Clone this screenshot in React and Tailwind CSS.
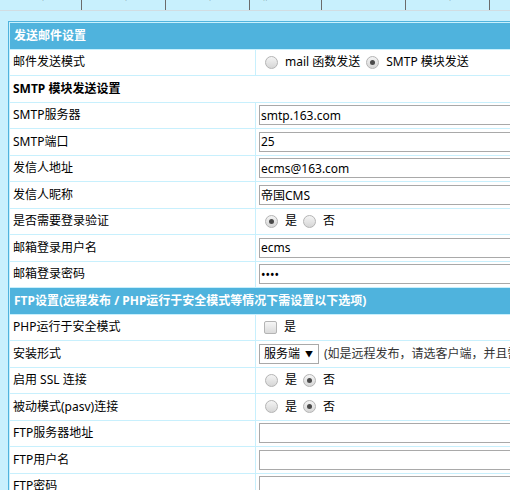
import React from "react";

const FONT = { fontFamily: '"Noto Sans", "Noto Sans CJK SC", sans-serif' };

const tabs = [
  { w: "w-[82px]", label: "基本属性设置" },
  { w: "w-[84px]", label: "用户属性设置" },
  { w: "w-[84px]", label: "附件属性设置" },
  { w: "w-[72px]", label: "信息设置" },
  { w: "w-[84px]", label: "模型设置" },
  { w: "w-[84px]", label: "其他属性设置" },
  { w: "w-[40px]", label: "" },
];

function Radio({ checked }) {
  return (
    <span className="inline-flex h-[13px] w-[13px] items-center justify-center rounded-full border border-[#b4b4b4] bg-gradient-to-b from-[#f4f4f4] to-[#d6d6d6]">
      {checked && <span className="h-[5px] w-[5px] rounded-full bg-[#4a4a4a]" />}
    </span>
  );
}

function RadioGroup({ items }) {
  return (
    <div className="flex items-center pl-[9px]">
      {items.map((it, i) => (
        <label key={i} className="mr-[6px] flex items-center">
          <Radio checked={it.checked} />
          <span className="ml-[7px]">{it.label}</span>
        </label>
      ))}
    </div>
  );
}

function TextBox({ value, type = "text" }) {
  return (
    <div className="pl-[3px]">
      <input
        type={type}
        defaultValue={value}
        readOnly
        className="h-[20px] w-[300px] border border-[#a9a9a9] bg-white px-[1px] text-[12px] text-black outline-none"
        style={FONT}
      />
    </div>
  );
}

function Header({ children }) {
  return (
    <div className="col-span-2 flex h-[25.5px] items-center bg-[#4fb3dd] pl-[4px] text-[12px] font-bold text-white">
      {children}
    </div>
  );
}

function Row({ label, children }) {
  return (
    <>
      <div className="flex h-[25.5px] items-center bg-white pl-[3px]">{label}</div>
      <div className="flex h-[25.5px] items-center bg-white">{children}</div>
    </>
  );
}

export default function App() {
  return (
    <div className="h-[490px] w-[510px] overflow-hidden bg-[#c8f0fd] text-[12px] text-black" style={FONT}>
      {/* top tab strip, mostly scrolled out of view */}
      <div className="flex h-[11px] overflow-hidden border-b border-[#d2dde2]">
        {tabs.map((t, i) => (
          <div key={i} className={`${t.w} shrink-0 overflow-hidden border-r border-[#6b6b6b] text-center`}>
            <div className="-mt-[12px] text-[12px] leading-[14px] text-black">{t.label}</div>
          </div>
        ))}
      </div>

      <div className="pl-[8px] pt-[10px]">
        <div className="w-[560px] border border-[#4fb3dd] bg-[#c8f0fd] p-px">
          <div className="grid grid-cols-[245px_1fr] gap-px">
            <Header>发送邮件设置</Header>
            <Row label="邮件发送模式">
              <RadioGroup
                items={[
                  { label: "mail 函数发送" },
                  { label: "SMTP 模块发送", checked: true },
                ]}
              />
            </Row>
            <div className="col-span-2 flex h-[25.5px] items-center bg-white pl-[3px] font-bold">
              SMTP 模块发送设置
            </div>
            <Row label="SMTP服务器">
              <TextBox value="smtp.163.com" />
            </Row>
            <Row label="SMTP端口">
              <TextBox value="25" />
            </Row>
            <Row label="发信人地址">
              <TextBox value="ecms@163.com" />
            </Row>
            <Row label="发信人昵称">
              <TextBox value="帝国CMS" />
            </Row>
            <Row label="是否需要登录验证">
              <RadioGroup items={[{ label: "是", checked: true }, { label: "否" }]} />
            </Row>
            <Row label="邮箱登录用户名">
              <TextBox value="ecms" />
            </Row>
            <Row label="邮箱登录密码">
              <TextBox value="1234" type="password" />
            </Row>

            <Header>FTP设置(远程发布 / PHP运行于安全模式等情况下需设置以下选项)</Header>
            <Row label="PHP运行于安全模式">
              <label className="flex items-center pl-[8px]">
                <span className="h-[13px] w-[13px] rounded-[2px] border border-[#b4b4b4] bg-gradient-to-b from-[#f6f6f6] to-[#dadada]" />
                <span className="ml-[7px]">是</span>
              </label>
            </Row>
            <Row label="安装形式">
              <div className="flex items-center whitespace-nowrap pl-[3px]">
                <div className="flex h-[20px] w-[60px] items-center border border-[#a9a9a9] bg-white pl-[4px]">
                  <span>服务端</span>
                  <span className="ml-[5px] text-[8px]">▼</span>
                </div>
                <span className="ml-[5px] text-[#333]">(如是远程发布，请选客户端，并且需要设置FTP)</span>
              </div>
            </Row>
            <Row label="启用 SSL 连接">
              <RadioGroup items={[{ label: "是" }, { label: "否", checked: true }]} />
            </Row>
            <Row label="被动模式(pasv)连接">
              <RadioGroup items={[{ label: "是" }, { label: "否", checked: true }]} />
            </Row>
            <Row label="FTP服务器地址">
              <TextBox value="" />
            </Row>
            <Row label="FTP用户名">
              <TextBox value="" />
            </Row>
            <Row label="FTP密码">
              <TextBox value="" type="password" />
            </Row>
          </div>
        </div>
      </div>
    </div>
  );
}
